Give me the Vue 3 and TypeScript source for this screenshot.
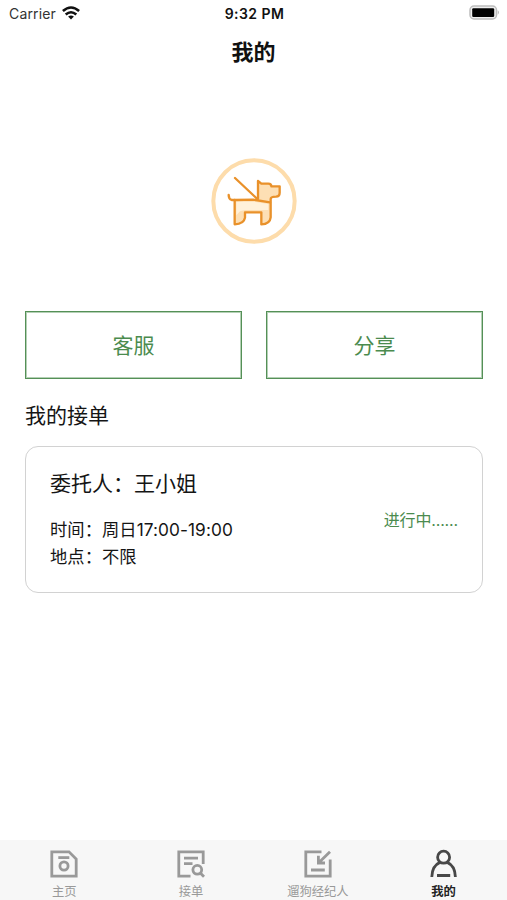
<script setup lang="ts">
import { ref } from 'vue'

interface Order {
  client: string
  time: string
  place: string
  status: string
}

interface Tab {
  id: string
  label: string
}

const actions: string[] = ['客服', '分享']

const orders: Order[] = [
  { client: '王小姐', time: '周日17:00-19:00', place: '不限', status: '进行中......' },
]

const tabs: Tab[] = [
  { id: 'home', label: '主页' },
  { id: 'orders', label: '接单' },
  { id: 'agent', label: '遛狗经纪人' },
  { id: 'mine', label: '我的' },
]

const active = ref<string>('mine')
</script>

<template>
  <div class="screen">
    <header class="status">
      <div class="carrier">
        <span class="carrier-name">Carrier</span>
        <svg class="wifi" viewBox="0 0 18 14" aria-hidden="true">
          <g fill="none" stroke="#111" stroke-width="2.6">
            <path d="M0.9 5Q9 -2 17.1 5" />
            <path d="M3.7 8.5Q9 4 14.3 8.5" />
          </g>
          <path d="M6.1 10.6Q9 8.2 11.9 10.6L9 13.5Z" fill="#111" />
        </svg>
      </div>
      <div class="clock">9:32 PM</div>
      <div class="power">
        <svg class="battery" viewBox="0 0 31 16" aria-hidden="true">
          <rect x="1" y="1" width="26.5" height="13" rx="4" fill="#eee" stroke="#bdbdbd" stroke-width="1.5" />
          <rect x="3.2" y="3.2" width="22" height="8.8" rx="1.2" fill="#000" />
          <path d="M28.8 5.3Q30.8 7.5 28.8 9.8Z" fill="#aaa" />
        </svg>
      </div>
    </header>

    <h1 class="title">我的</h1>

    <div class="avatar">
      <svg class="dog" viewBox="0 0 318 300" aria-hidden="true">
        <circle cx="162" cy="153" r="122" fill="none" stroke="#fddcab" stroke-width="12" />
        <path d="M175 94L185 101H206L213 109H240V130L229 140L212 144V208Q205 223 184 223V187H135V207Q126 223 104 223V150L172 148Z" fill="#fddfb4" />
        <path d="M109 155H162L205 162V180H136L120 184L109 196Z" fill="#fff1da" />
        <g fill="none" stroke="#e9912a" stroke-width="7" stroke-linejoin="round" stroke-linecap="round">
          <path d="M105 84L172 147" />
          <path d="M174 146V93L184 101H205Q214 101 214 109H239V128Q239 139 228 140Q212 140 212 147V202Q210 222 184 223V187H135V203Q132 222 104 223V150H95Q86 147 86 135" />
          <path d="M104 150L160 149L210 157" />
        </g>
      </svg>
    </div>

    <div class="actions">
      <button v-for="action in actions" :key="action" class="action" type="button">{{ action }}</button>
    </div>

    <h2 class="heading">我的接单</h2>

    <section v-for="order in orders" :key="order.client" class="card">
      <div class="details">
        <h3 class="client">委托人：{{ order.client }}</h3>
        <p class="line">时间：{{ order.time }}</p>
        <p class="line">地点：{{ order.place }}</p>
      </div>
      <span class="state">{{ order.status }}</span>
    </section>

    <nav class="tabs">
      <button
        v-for="tab in tabs"
        :key="tab.id"
        type="button"
        class="tab"
        :class="{ active: active === tab.id }"
        @click="active = tab.id"
      >
        <svg class="icon" viewBox="0 0 30 30" aria-hidden="true">
          <g v-if="tab.id === 'home'">
            <path d="M2.8 2.8H20L27.2 10V27.2H2.8Z" />
            <circle cx="15" cy="17" r="4.1" />
            <path d="M9.3 8.6H20.3" />
          </g>
          <g v-else-if="tab.id === 'orders'">
            <path d="M14.5 27.2H2.8V2.8H27.2V15" />
            <path d="M8 9.2H22M8 14.7H16.5" />
            <circle cx="21.3" cy="20.8" r="4.4" />
            <path d="M24.3 24L28 27.8" />
          </g>
          <g v-else-if="tab.id === 'agent'">
            <path d="M18.5 2.8H2.8V27.2H27.2V10.5" />
            <path d="M27 2.8L16 13.6M15.4 6.7V14H22M8 21H21.8" />
          </g>
          <g v-else>
            <circle cx="14.6" cy="8.2" r="6" />
            <path d="M10.9 13.4C5.5 15.8 3 20 2.8 28M18.3 13.4C23.7 15.8 26.2 20 26.4 28M8 26.5H21.2" />
          </g>
        </svg>
        <span class="label">{{ tab.label }}</span>
      </button>
    </nav>
  </div>
</template>

<style>
body {
  margin: 0;
  background: #fff;
}
</style>

<style scoped>
.screen {
  display: flex;
  flex-direction: column;
  box-sizing: border-box;
  width: 100%;
  height: 100vh;
  overflow: hidden;
  background: #fff;
  color: #151515;
  font-family: Inter, "Noto Sans CJK SC", sans-serif;
}

h1,
h2,
h3,
p {
  margin: 0;
  font-weight: 400;
}

button {
  padding: 0;
  border: 0;
  background: none;
  font-family: inherit;
}

.status {
  display: grid;
  grid-template-columns: 1fr auto 1fr;
  align-items: center;
  box-sizing: border-box;
  height: 28px;
  padding: 0 7px 2px 9px;
  font-size: 14px;
}

.carrier {
  display: flex;
  align-items: center;
  gap: 6px;
  color: #333;
}

.carrier-name {
  letter-spacing: 0.15px;
}

.wifi {
  width: 18px;
  height: 14px;
}

.clock {
  color: #111;
  font-weight: 600;
  letter-spacing: 0.45px;
}

.power {
  display: flex;
  justify-content: flex-end;
}

.battery {
  width: 31px;
  height: 16px;
}

.title {
  height: 48px;
  color: #111;
  font-size: 22px;
  font-weight: 700;
  line-height: 48px;
  text-align: center;
}

.avatar {
  display: flex;
  justify-content: center;
  margin-top: 74px;
  padding-right: 2px;
}

.dog {
  width: 106px;
  height: 100px;
}

.actions {
  display: grid;
  grid-template-columns: 1fr 1fr;
  gap: 24px;
  margin: 61px 24px 0 25px;
}

.action {
  height: 68px;
  padding-bottom: 2px;
  border: 1px solid #559057;
  box-shadow: inset 0 0 0 1px #b4d0b5;
  color: #4b8b4e;
  font-size: 21px;
}

.heading {
  margin: 16px 25px 0;
  height: 42px;
  font-size: 21px;
  line-height: 42px;
}

.card {
  display: flex;
  align-items: center;
  justify-content: space-between;
  box-sizing: border-box;
  height: 147px;
  margin: 9px 24px 0 25px;
  padding: 0 24px;
  border: 1px solid #d2d2d2;
  border-radius: 13px;
}

.client {
  margin-bottom: 18px;
  font-size: 21px;
  line-height: 30px;
}

.line {
  font-size: 17.3px;
  letter-spacing: 0.06px;
  line-height: 26.5px;
}

.state {
  margin-bottom: 2px;
  color: #4b8b4e;
  font-size: 16px;
  letter-spacing: -0.15px;
}

.tabs {
  display: grid;
  grid-template-columns: repeat(4, 1fr);
  height: 60px;
  margin-top: auto;
  background: #f7f7f7;
}

.tab {
  display: flex;
  flex-direction: column;
  align-items: center;
  padding: 9px 0 0 2px;
  color: #999;
}

.icon {
  flex: none;
  width: 30px;
  height: 30px;
  fill: none;
  stroke: currentColor;
  stroke-width: 2.8;
}

.label {
  margin-top: 4px;
  font-size: 12.3px;
  line-height: 18px;
}

.active {
  padding-left: 0;
  color: #484848;
}

.active .label {
  color: #222;
  font-weight: 700;
}
</style>
